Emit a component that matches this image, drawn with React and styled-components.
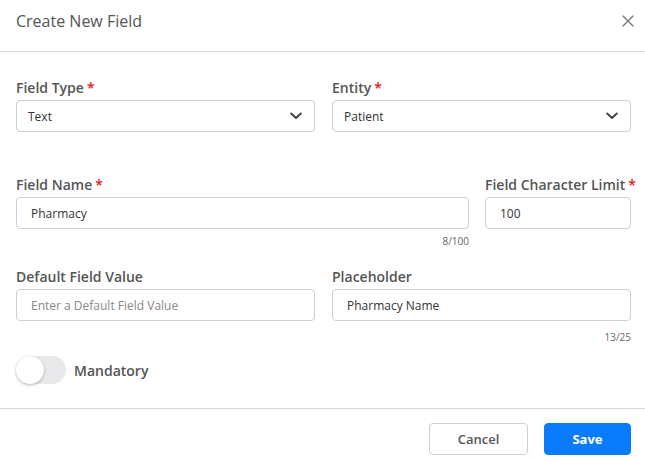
import React from "react";
import styled, { createGlobalStyle } from "styled-components";

const Global = createGlobalStyle`
  html, body { margin: 0; padding: 0; background: #fff; }
  body { font-family: "Open Sans", "Noto Sans", sans-serif; color: #555; }
  * { box-sizing: border-box; }
`;

const Modal = styled.div`
  width: 645px;
  height: 461px;
  background: #fff;
  display: flex;
  flex-direction: column;
`;

const Header = styled.div`
  height: 52px;
  padding: 0 7px 10px 16px;
  display: flex;
  align-items: center;
  justify-content: space-between;
  border-bottom: 1px solid #d6d6d6;
`;

const Title = styled.h1`
  margin: 0;
  font-size: 16px;
  font-weight: 400;
  color: #555;
  line-height: 22px;
`;

const CloseButton = styled.button`
  border: 0;
  background: none;
  padding: 0;
  width: 20px;
  height: 20px;
  display: flex;
  align-items: center;
  justify-content: center;
  cursor: pointer;
`;

const Body = styled.div`
  padding: 26px 14px 0 16px;
  flex: 1;
`;

const Row = styled.div`
  display: grid;
  grid-template-columns: ${(p) => p.$cols};
  column-gap: ${(p) => p.$gap}px;
  align-items: start;
  margin-bottom: ${(p) => p.$mb}px;
`;

const Field = styled.div`
  display: flex;
  flex-direction: column;
`;

const Label = styled.label`
  font-size: 14px;
  font-weight: 600;
  color: #555;
  line-height: 20px;
  margin-bottom: 2px;
  white-space: nowrap;
`;

const Star = styled.span`
  color: #e8141b;
  margin-left: 3px;
`;

const Box = styled.div`
  height: 32px;
  border: 1px solid #cfcfcf;
  border-radius: 4px;
  display: flex;
  align-items: center;
  justify-content: space-between;
  padding: 0 12px 0 ${(p) => (p.$select ? "11px" : "14px")};
  font-size: 12px;
  color: ${(p) => (p.$placeholder ? "#888" : "#333")};
  background: #fff;
`;

const Counter = styled.div`
  font-size: 10px;
  color: #666;
  text-align: right;
  line-height: 14px;
  margin-top: ${(p) => p.$mt}px;
`;

const ToggleRow = styled.div`
  display: flex;
  align-items: center;
  gap: 8px;
  margin-top: 12px;
`;

const Track = styled.div`
  width: 50px;
  height: 28px;
  border-radius: 14px;
  background: #e9e8ea;
  position: relative;
`;

const Knob = styled.div`
  position: absolute;
  left: 0;
  top: 0;
  width: 28px;
  height: 28px;
  border-radius: 50%;
  background: #fff;
  box-shadow: 0 1px 3px rgba(0, 0, 0, 0.3);
`;

const ToggleLabel = styled.span`
  font-size: 14px;
  font-weight: 600;
  color: #555;
`;

const Footer = styled.div`
  border-top: 1px solid #d6d6d6;
  padding: 14px 14px 6px 16px;
  display: flex;
  justify-content: flex-end;
  gap: 16px;
`;

const Button = styled.button`
  height: 32px;
  width: ${(p) => p.$w}px;
  border-radius: 4px;
  font-family: "Open Sans", sans-serif;
  font-size: 13px;
  font-weight: ${(p) => (p.$primary ? 700 : 600)};
  color: ${(p) => (p.$primary ? "#fff" : "#555")};
  background: ${(p) => (p.$primary ? "#0a7cfb" : "#fff")};
  border: 1px solid ${(p) => (p.$primary ? "#0a7cfb" : "#cfcfcf")};
  cursor: pointer;
`;

const Chevron = () => (
  <svg width="12" height="8" viewBox="0 0 12 8" fill="none">
    <path d="M1.2 1.5 L6 6 L10.8 1.5" stroke="#444" strokeWidth="2" strokeLinecap="round" strokeLinejoin="round" />
  </svg>
);

const CloseIcon = () => (
  <svg width="12" height="12" viewBox="0 0 12 12" fill="none">
    <path d="M1 1 L11 11 M11 1 L1 11" stroke="#777" strokeWidth="1.4" strokeLinecap="round" />
  </svg>
);

export default function App() {
  return (
    <>
      <Global />
      <Modal>
        <Header>
          <Title>Create New Field</Title>
          <CloseButton aria-label="Close">
            <CloseIcon />
          </CloseButton>
        </Header>
        <Body>
          <Row $cols="299px 299px" $gap={17} $mb={43}>
            <Field>
              <Label>Field Type<Star>*</Star></Label>
              <Box $select>
                <span>Text</span>
                <Chevron />
              </Box>
            </Field>
            <Field>
              <Label>Entity<Star>*</Star></Label>
              <Box $select>
                <span>Patient</span>
                <Chevron />
              </Box>
            </Field>
          </Row>
          <Row $cols="453px 146px" $gap={16} $mb={19}>
            <Field>
              <Label>Field Name<Star>*</Star></Label>
              <Box>Pharmacy</Box>
              <Counter $mt={5}>8/100</Counter>
            </Field>
            <Field>
              <Label>Field Character Limit<Star>*</Star></Label>
              <Box>100</Box>
            </Field>
          </Row>
          <Row $cols="299px 299px" $gap={17} $mb={0}>
            <Field>
              <Label>Default Field Value</Label>
              <Box $placeholder>Enter a Default Field Value</Box>
            </Field>
            <Field>
              <Label>Placeholder</Label>
              <Box>Pharmacy Name</Box>
              <Counter $mt={9}>13/25</Counter>
            </Field>
          </Row>
          <ToggleRow>
            <Track>
              <Knob />
            </Track>
            <ToggleLabel>Mandatory</ToggleLabel>
          </ToggleRow>
        </Body>
        <Footer>
          <Button $w={99}>Cancel</Button>
          <Button $w={87} $primary>Save</Button>
        </Footer>
      </Modal>
    </>
  );
}
